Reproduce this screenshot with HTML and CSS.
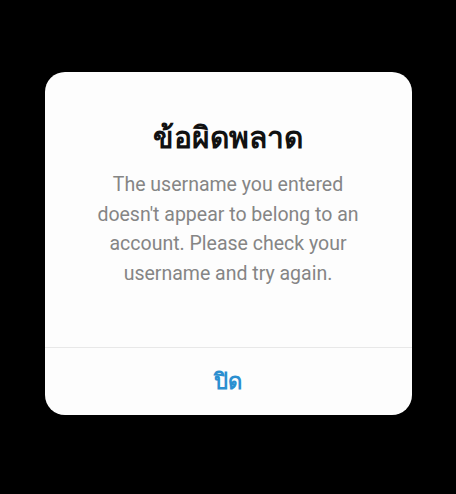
FILE: index.html
```html
<!DOCTYPE html>
<html lang="th">
<head>
  <meta charset="UTF-8" />
  <meta name="viewport" content="width=device-width, initial-scale=1.0"/>
  <title>ข้อผิดพลาด</title>
  <link rel="stylesheet" href="styles.css">
</head>
<body>
  <div class="dialog">
    <div class="dialog-body">
      <h2 class="dialog-title">ข้อผิดพลาด</h2>
      <p class="dialog-text">The username you entered doesn't appear to belong to an account. Please check your username and try again.</p>
    </div>
    <button class="dialog-btn">ปิด</button>
  </div>
</body>
</html>
```

FILE: styles.css
```css
body {
  margin: 0;
  background: #000;
  font-family: Roboto, "Noto Sans", sans-serif;
  display: flex;
  justify-content: center;
  align-items: flex-start;
  padding-top: 72px;
  min-height: 100vh;
  box-sizing: border-box;
}

.dialog {
  width: 367px;
  height: 343px;
  background: #fdfdfd;
  border-radius: 20px;
  display: flex;
  flex-direction: column;
  overflow: hidden;
}

.dialog-body {
  flex: 1;
  padding: 46px 38px 0;
  text-align: center;
}

.dialog-title {
  margin: 0 0 12px;
  font-size: 30px;
  font-weight: bold;
  color: #111;
  line-height: 40px;
}

.dialog-text {
  margin: 0;
  font-size: 19.5px;
  line-height: 29.5px;
  color: #858585;
}

.dialog-btn {
  height: 68px;
  border: none;
  border-top: 1px solid #e8e8e8;
  background: transparent;
  color: #2b8fd0;
  font-family: inherit;
  font-size: 22px;
  font-weight: bold;
  cursor: pointer;
}
```
